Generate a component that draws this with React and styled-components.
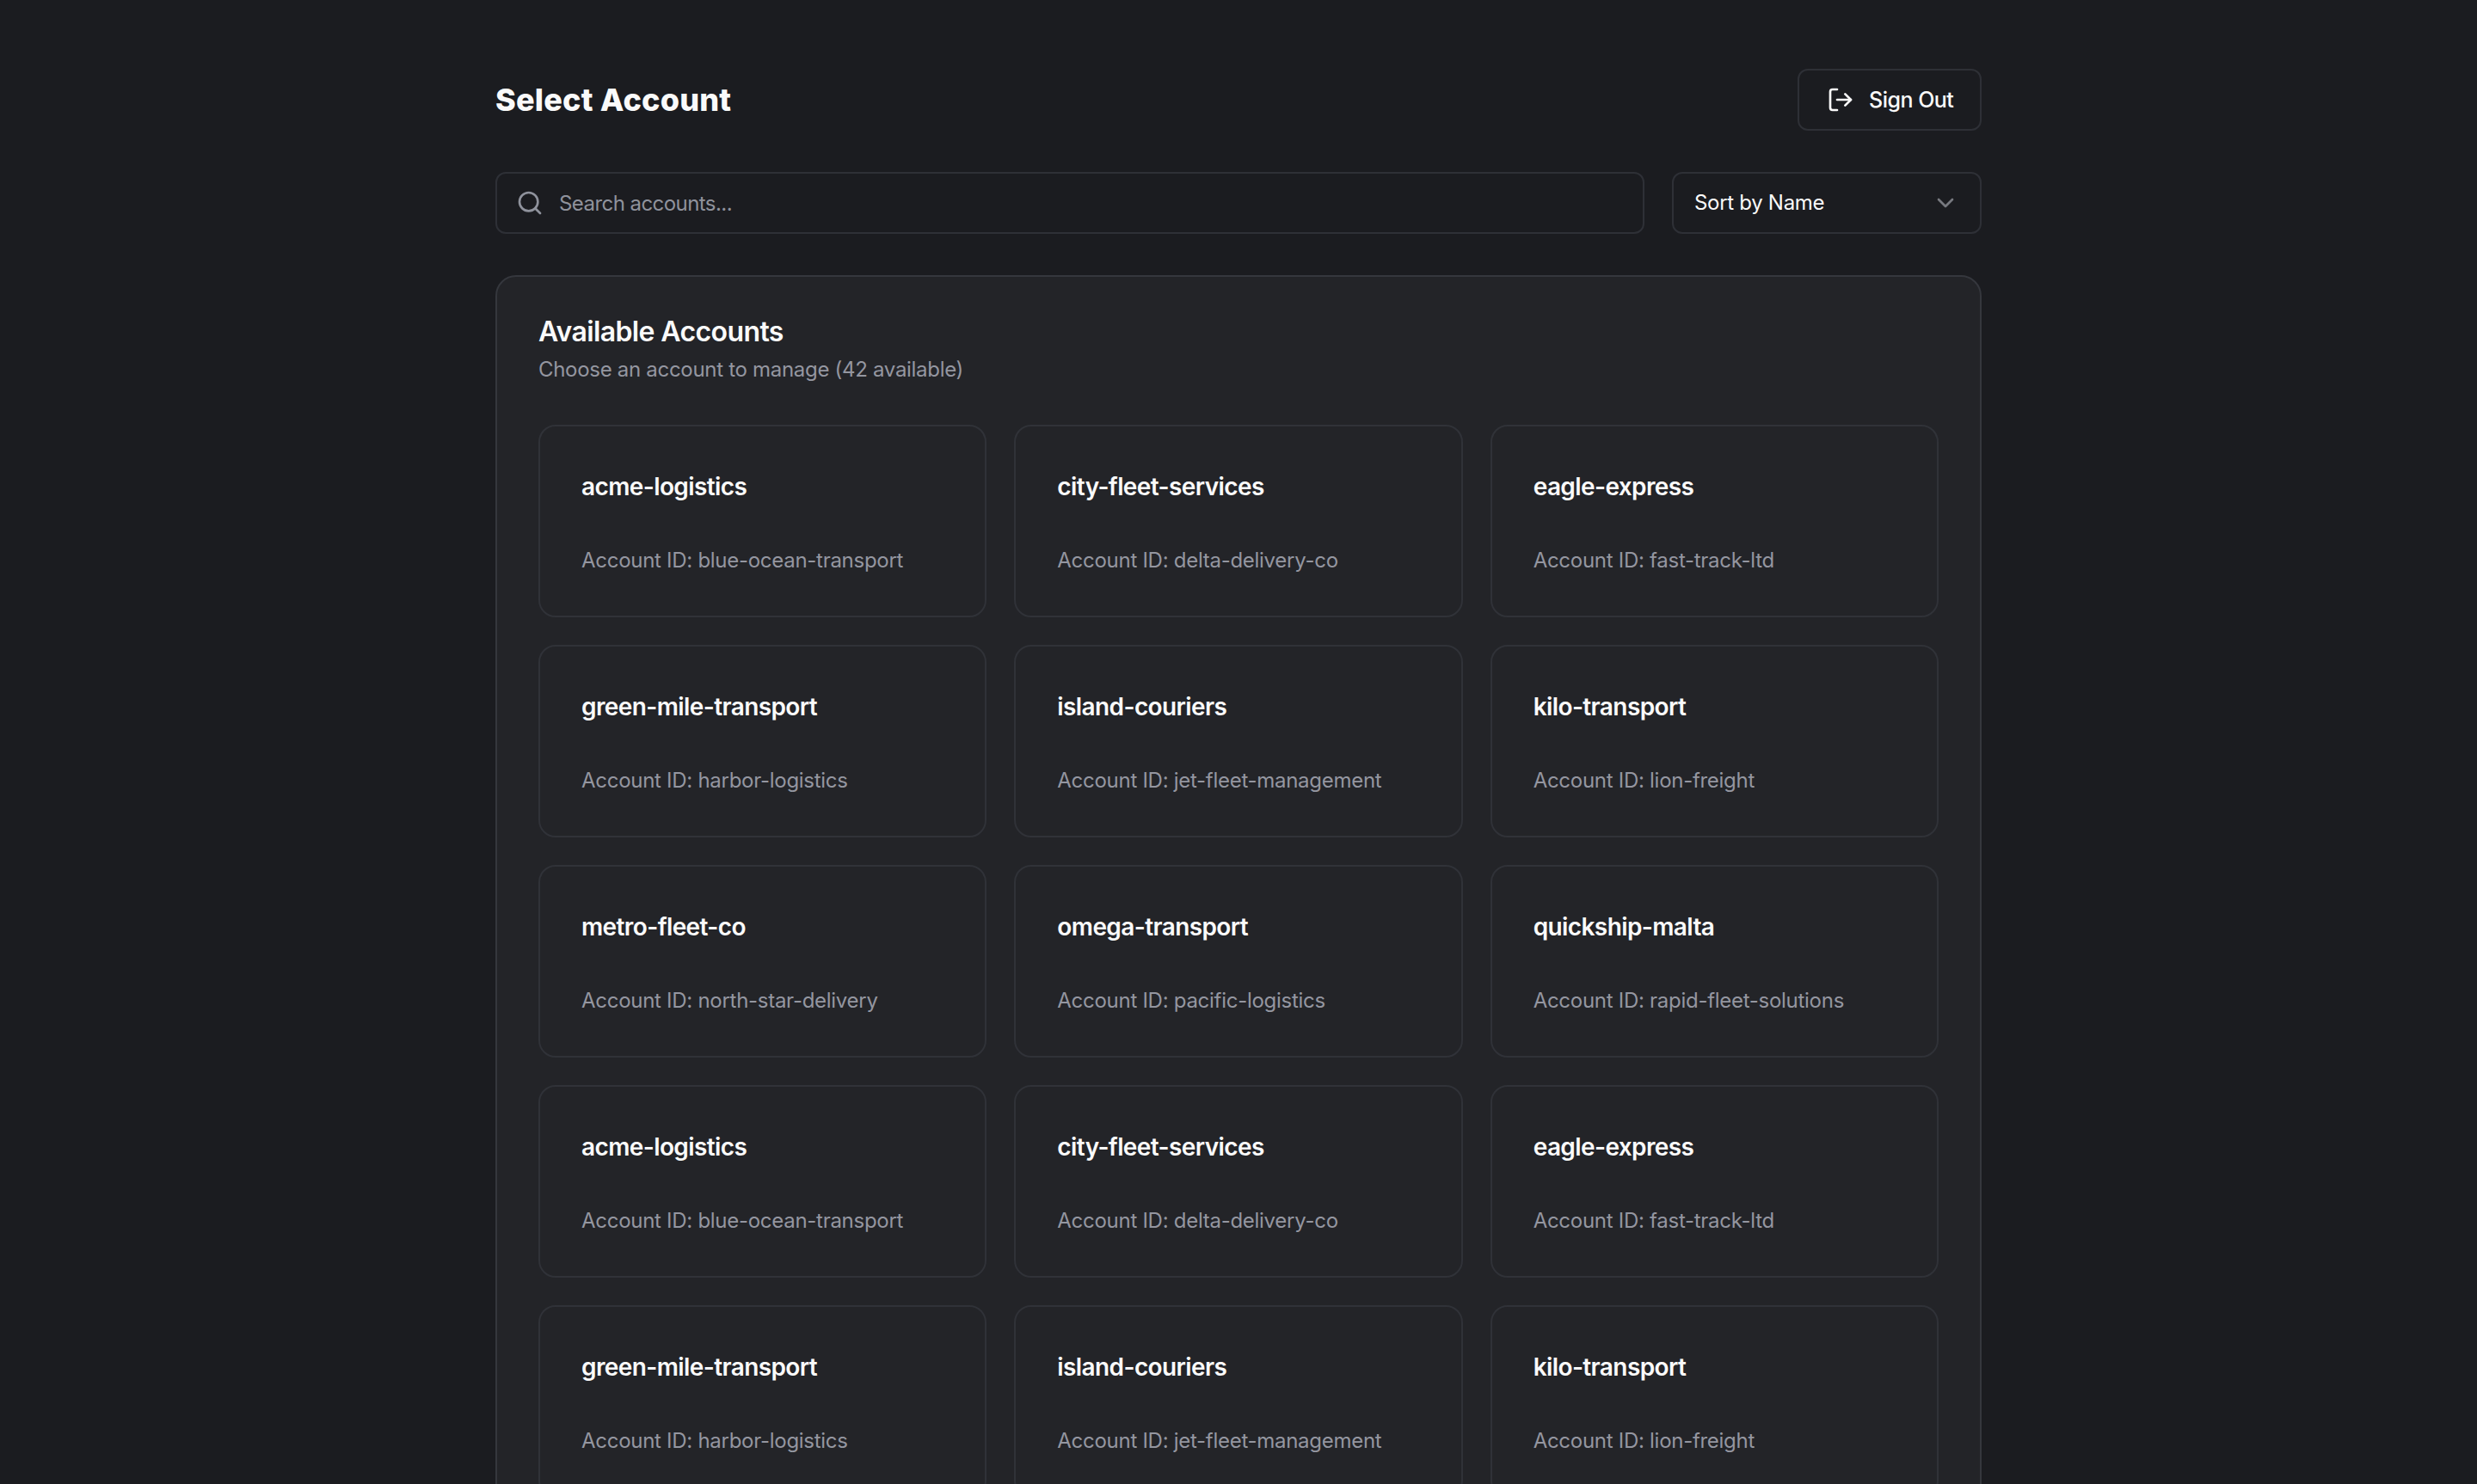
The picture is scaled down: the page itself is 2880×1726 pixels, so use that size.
import React from 'react';
import styled, { createGlobalStyle } from 'styled-components';
import { ChevronDown, LogOut, Search } from 'lucide-react';

const Global = createGlobalStyle`
  html, body { margin: 0; height: 100%; overflow: hidden; background: #1b1c20; }
  #root { height: 100%; }
  * { box-sizing: border-box; }
`;

const Page = styled.div`
  height: 100%;
  overflow: hidden;
  padding: 80px 576px 0;
  background: #1b1c20;
  color: #fafafa;
  font-family: Inter, "Liberation Sans", sans-serif;
`;
const Header = styled.header`
  display: flex;
  align-items: center;
  justify-content: space-between;
  height: 72px;
  margin-bottom: 48px;
`;
const PageTitle = styled.h1`
  margin: 0;
  font-size: 36px;
  line-height: 40px;
  font-weight: 800;
  letter-spacing: 0.2px;
  color: #fafafa;
`;
const SignOut = styled.button`
  display: flex;
  align-items: center;
  gap: 17px;
  height: 72px;
  width: 214px;
  padding: 0 0 0 32px;
  background: transparent;
  border: 2px solid #2e3036;
  border-radius: 12px;
  color: #fafafa;
  font: 500 25px/36px Inter, sans-serif;
  letter-spacing: -0.5px;
`;
const Controls = styled.div`
  display: flex;
  gap: 32px;
  margin-bottom: 48px;
`;
const SearchBox = styled.label`
  flex: 1;
  display: flex;
  align-items: center;
  gap: 18px;
  height: 72px;
  padding-left: 22px;
  border: 2px solid #2e3036;
  border-radius: 12px;
  color: #8f929c;
`;
const SearchInput = styled.input`
  flex: 1;
  border: 0;
  outline: 0;
  background: transparent;
  padding: 2px 0 0;
  color: #fafafa;
  font: 400 24px/36px Inter, sans-serif;
  letter-spacing: -0.56px;
  &::placeholder { color: #8f929c; opacity: 1; }
`;
const Sort = styled.button`
  display: flex;
  align-items: center;
  justify-content: space-between;
  width: 360px;
  height: 72px;
  padding: 0 24px;
  background: transparent;
  border: 2px solid #2e3036;
  border-radius: 12px;
  color: #fafafa;
  font: 400 24px/36px Inter, sans-serif;
  letter-spacing: -0.3px;
  svg { color: #77797f; }
`;
const Panel = styled.section`
  padding: 48px;
  background: #232428;
  border: 2px solid #35373d;
  border-radius: 24px;
`;
const PanelTitle = styled.h2`
  margin: 0;
  font-size: 32px;
  line-height: 32px;
  font-weight: 600;
  letter-spacing: -0.61px;
  color: #fafafa;
`;
const PanelSub = styled.p`
  margin: 8px 0 44px;
  font-size: 24px;
  line-height: 40px;
  letter-spacing: -0.3px;
  color: #9496a0;
`;
const Grid = styled.div`
  display: grid;
  grid-template-columns: repeat(3, 1fr);
  gap: 32px;
`;
const Card = styled.article`
  height: 224px;
  padding: 48px;
  border: 2px solid #303238;
  border-radius: 20px;
`;
const CardTitle = styled.h3`
  margin: 0 0 44px;
  font-size: 28px;
  line-height: 44px;
  font-weight: 600;
  letter-spacing: -0.6px;
  color: #fafafa;
`;
const CardSub = styled.p`
  margin: 0;
  font-size: 24px;
  line-height: 40px;
  letter-spacing: -0.28px;
  color: #9496a0;
`;

const accounts = [
  ['acme-logistics', 'blue-ocean-transport'],
  ['city-fleet-services', 'delta-delivery-co'],
  ['eagle-express', 'fast-track-ltd'],
  ['green-mile-transport', 'harbor-logistics'],
  ['island-couriers', 'jet-fleet-management'],
  ['kilo-transport', 'lion-freight'],
  ['metro-fleet-co', 'north-star-delivery'],
  ['omega-transport', 'pacific-logistics'],
  ['quickship-malta', 'rapid-fleet-solutions'],
];
const cards = Array.from({ length: 15 }, (_, i) => accounts[i % accounts.length]);

export default function App() {
  return (
    <Page>
      <Global />
      <Header>
        <PageTitle>Select Account</PageTitle>
        <SignOut><LogOut size={32} />Sign Out</SignOut>
      </Header>
      <Controls>
        <SearchBox>
          <Search size={32} />
          <SearchInput placeholder="Search accounts..." />
        </SearchBox>
        <Sort>Sort by Name<ChevronDown size={32} /></Sort>
      </Controls>
      <Panel>
        <PanelTitle>Available Accounts</PanelTitle>
        <PanelSub>Choose an account to manage (42 available)</PanelSub>
        <Grid>
          {cards.map(([name, id], i) => (
            <Card key={i}>
              <CardTitle>{name}</CardTitle>
              <CardSub>Account ID: {id}</CardSub>
            </Card>
          ))}
        </Grid>
      </Panel>
    </Page>
  );
}
